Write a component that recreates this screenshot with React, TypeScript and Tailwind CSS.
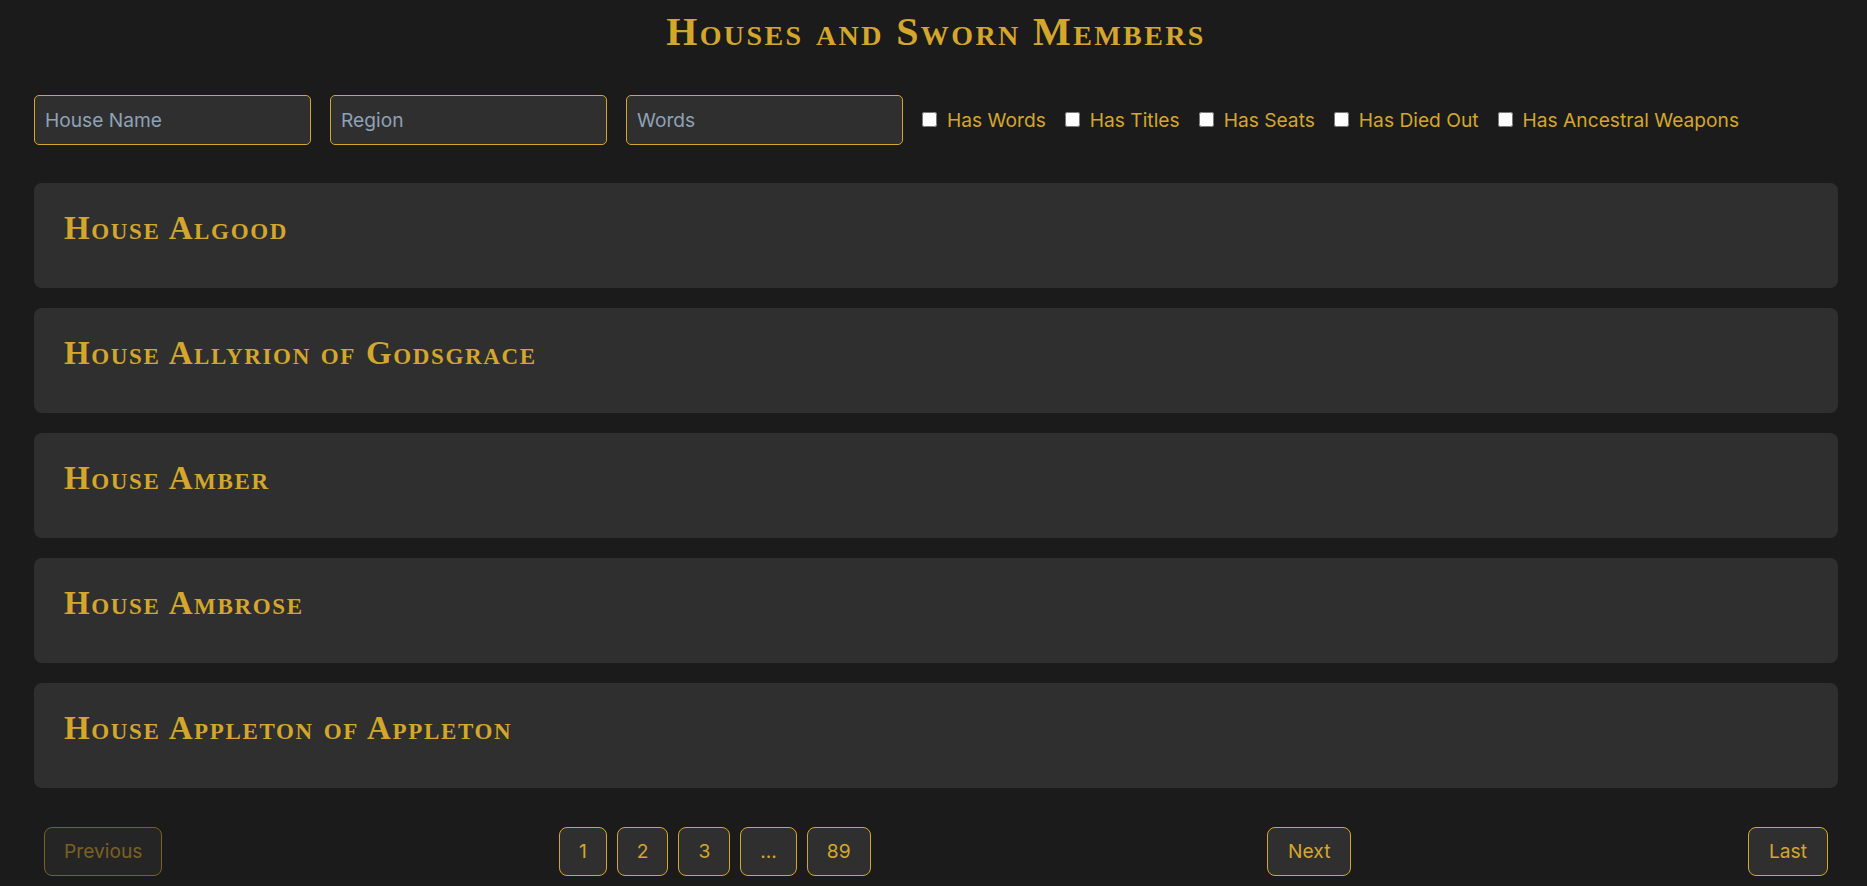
import React from 'react';

const houses = [
	'House Algood',
	'House Allyrion of Godsgrace',
	'House Amber',
	'House Ambrose',
	'House Appleton of Appleton',
];

const filters = ['Has Words', 'Has Titles', 'Has Seats', 'Has Died Out', 'Has Ancestral Weapons'];

const pages = ['1', '2', '3', '...', '89'];

const serif = "font-['Liberation_Serif',serif] font-bold [font-variant:small-caps]";

function FilterBar() {
	return (
		<div className="flex items-center gap-[19px]">
			{['House Name', 'Region', 'Words'].map((p) => (
				<input
					key={p}
					type="text"
					placeholder={p}
					className="w-[277px] h-[50px] px-[10px] bg-[#2f2f2f] border border-[#d4a72c] rounded-[5px] text-[19.2px] text-[#d4a72c] placeholder:text-[#8fa1b6] outline-none"
				/>
			))}
			{filters.map((f) => (
				<label key={f} className="flex items-center gap-[10px] text-[19.2px] text-[#d4a72c] cursor-pointer">
					<input type="checkbox" className="m-0 w-[15px] h-[15px]" />
					{f}
				</label>
			))}
		</div>
	);
}

function HouseCard({ name }: { name: string }) {
	return (
		<div className="bg-[#2f2f2f] rounded-lg pt-[29px] pb-[43px] px-[30px]">
			<h2 className={`${serif} tracking-[0.05em] text-[33px] leading-none text-[#d4a72c]`}>{name}</h2>
		</div>
	);
}

function Pagination() {
	const btn = 'py-3 bg-[#2f2f2f] border border-[#d4a72c] rounded-lg text-[19.2px] leading-[23px] text-[#d4a72c]';
	return (
		<div className="flex items-center justify-between px-[10px]">
			<button className={`${btn} px-[19px] opacity-50`} disabled>
				Previous
			</button>
			<div className="flex items-center gap-[10px]">
				{pages.map((p) => (
					<button key={p} className={`${btn} px-[19px]`}>
						{p}
					</button>
				))}
			</div>
			<button className={`${btn} px-5`}>Next</button>
			<button className={`${btn} px-5`}>Last</button>
		</div>
	);
}

export default function App() {
	return (
		<div className="min-h-screen bg-[#1b1b1b] pl-[34px] pr-[29px] pt-3 pb-4 font-['Inter',sans-serif]">
			<h1 className={`${serif} tracking-[0.06em] text-[40px] leading-none text-center text-[#d4a72c]`}>
				Houses and Sworn Members
			</h1>
			<div className="mt-[43px]">
				<FilterBar />
			</div>
			<div className="mt-[38px] flex flex-col gap-[20px]">
				{houses.map((h) => (
					<HouseCard key={h} name={h} />
				))}
			</div>
			<div className="mt-[39px]">
				<Pagination />
			</div>
		</div>
	);
}
